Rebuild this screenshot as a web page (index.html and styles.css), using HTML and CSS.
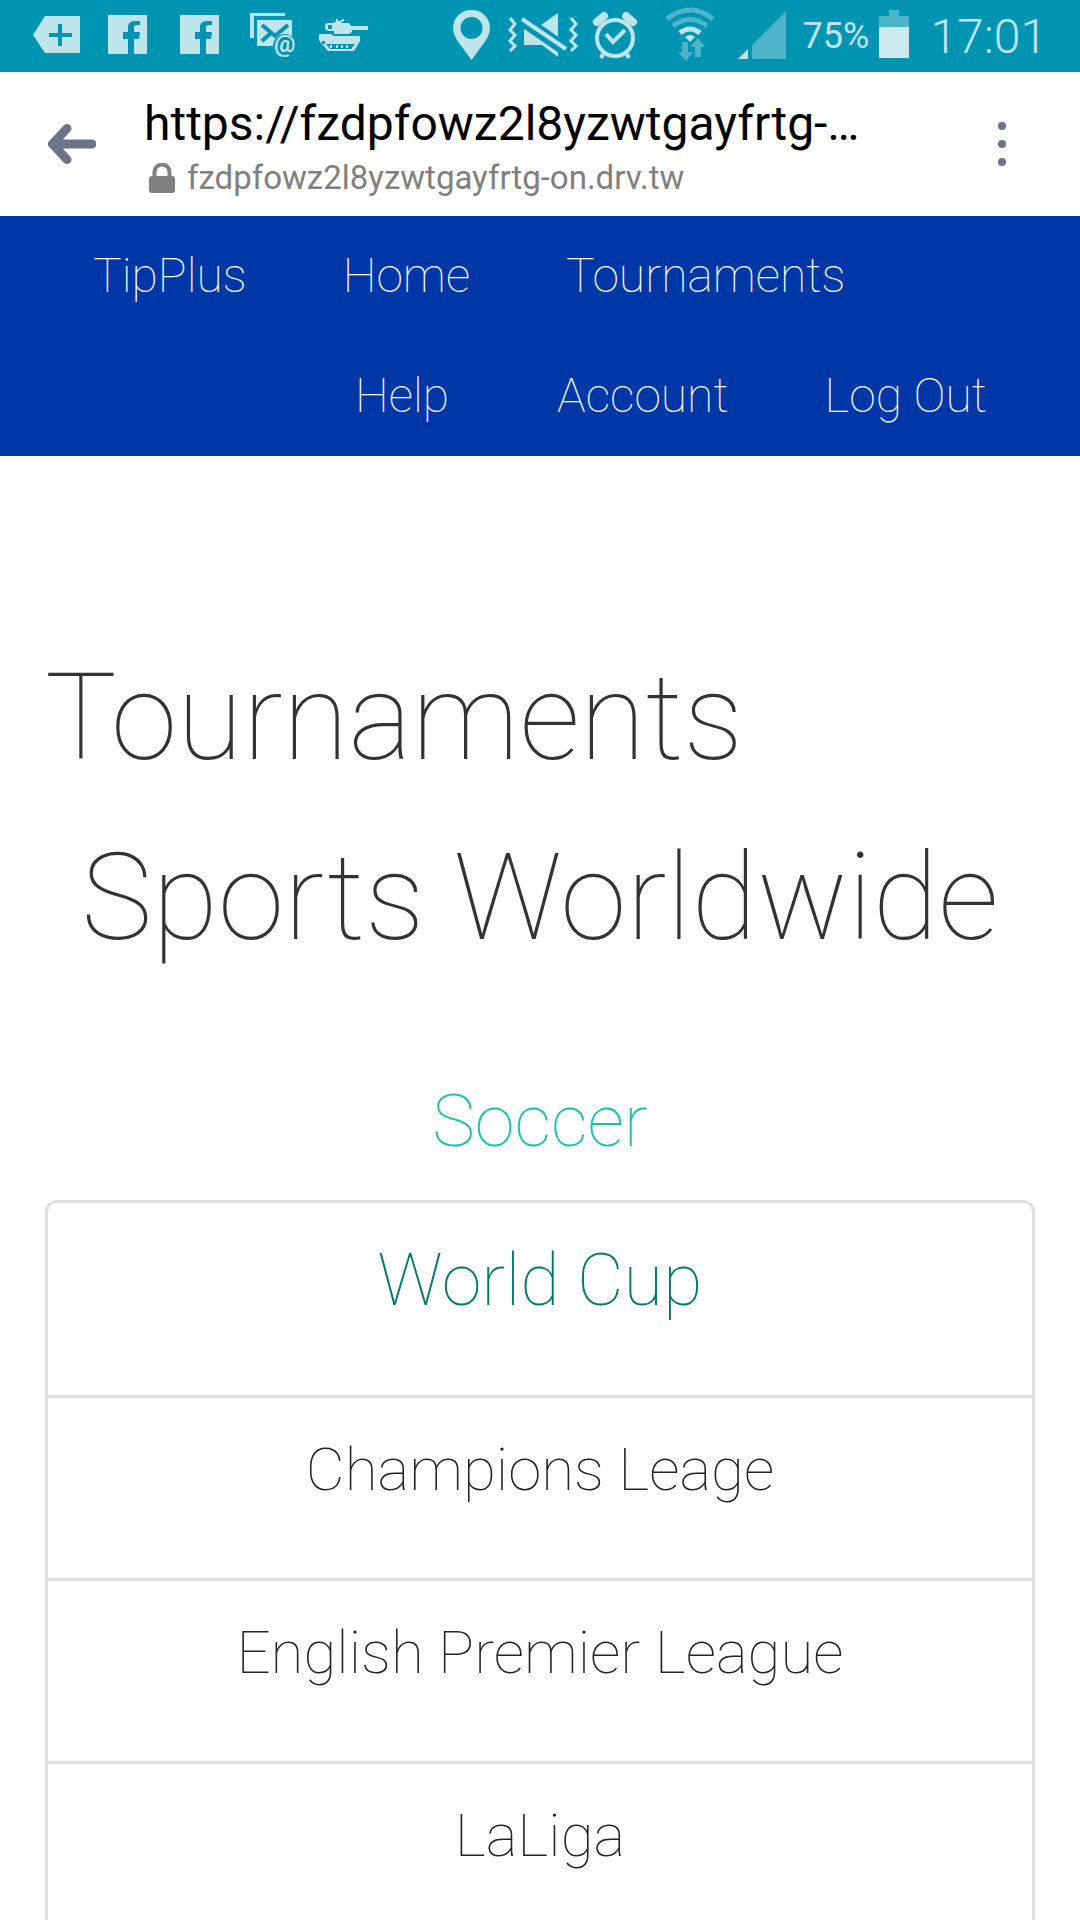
FILE: index.html
```html
<!DOCTYPE html>
<html lang="en">
<head>
<meta charset="utf-8">
<meta name="viewport" content="width=device-width, initial-scale=1">
<title>TipPlus - Tournaments</title>
<link rel="stylesheet" href="styles.css">
</head>
<body>
<div class="status">
  <div class="status-group">
    <svg class="status-icon" viewBox="0 0 72 72" aria-hidden="true"><path d="M25 16h35v37H25L13 35z"/><path class="cut" d="M40 24v22M29 35h23"/></svg>
    <svg class="status-icon" viewBox="0 0 72 72" aria-hidden="true"><path fill-rule="evenodd" d="M16 15h39v39H42V39h5l1-7h-6v-5q0-2 3-2h3v-4h-5q-7 0-7 6v5h-5v7h5v15H16z"/></svg>
    <svg class="status-icon" viewBox="0 0 72 72" aria-hidden="true"><path fill-rule="evenodd" d="M16 15h39v39H42V39h5l1-7h-6v-5q0-2 3-2h3v-4h-5q-7 0-7 6v5h-5v7h5v15H16z"/></svg>
    <svg class="status-icon" viewBox="0 0 72 72" aria-hidden="true"><path d="M14 13h35v3H18v22h-4z"/><path d="M21 20h35v26H21z"/><path class="cut" d="M26 25l13 11 13-11M26 41l9-8"/><circle class="bar-fill" cx="49" cy="46" r="12"/><text x="38" y="52" class="at">@</text></svg>
    <svg class="status-icon" viewBox="0 0 72 72" aria-hidden="true"><path fill-rule="evenodd" d="M19 23h7l2-2v-2h2v2h2l3-2h1v2l-4 2h9l2 3h17v4H44v2l-3 2H26v-3h-6l-3-2v-4zM20 25v4h4v-4z"/><path fill-rule="evenodd" d="M12 34h11l3 2h25l1 1v4l-6 10H20l-7-8-2-3v-5zM18 44l4 5h21l4-5H18zM14 41v3h3v-3z"/><path d="M22 45h2v3h-2zM28 45h2v3h-2zM33 45h2v3h-2zM38 45h2v3h-2z"/></svg>
  </div>
  <div class="status-group">
    <svg class="status-icon" viewBox="0 0 72 72" aria-hidden="true"><path fill-rule="evenodd" d="M36 10a18 18 0 0 1 19 18c0 7-5 14-9 19L36.500 60 27 47c-4-5-9-12-9-19a18 18 0 0 1 18-18zM36.500 17a11 11 0 1 0 0 22 11 11 0 0 0 0-22z"/></svg>
    <svg class="status-icon" viewBox="0 0 72 72" aria-hidden="true"><path d="M51 13v24L34 25zM17 28l34 23v6L35 45H17z"/><path class="gap" d="M14 19l45 31"/><path class="stroke4" d="M15 19l44 30"/><path class="stroke2" d="M3 18l5 6-5 6 5 5-5 6 5 5-5 5M64 18l5 6-5 6 5 5-5 6 5 5-5 5"/></svg>
    <svg class="status-icon" viewBox="0 0 72 72" aria-hidden="true"><circle class="stroke4" cx="36" cy="38" r="18"/><path class="stroke4" d="M27 34l7 8 12-12M24 54l-2 4M48 54l2 4"/><path class="stroke8" d="M18 22l7-6M54 22l-7-6"/></svg>
    <svg class="status-icon" viewBox="0 0 72 72" aria-hidden="true"><path class="arc dim" d="M16 19q23-18 46 0M22 26q17-13 34 0"/><path class="arc" d="M29 33q10-8 20 0"/><path d="M39 42l-5-5q5-4 10 0z"/><path class="dim-fill" d="M31 42h6v10h5l-7 9-8-9h4zM44 57V47h-5l8-9 7 9h-4v10z"/></svg>
    <svg class="status-icon" viewBox="0 0 72 72" aria-hidden="true"><path d="M15 59l10-10v10z"/><path class="dim-fill" d="M29 59V45l34-34v48z"/></svg>
    <span class="percent">75%</span>
    <svg class="battery" viewBox="0 0 30 72" aria-hidden="true"><path class="dim-fill" d="M10 10h10v6h10v11H0V16h10z"/><path class="level" d="M0 27h30v31H0z"/></svg>
    <span class="clock">17:01</span>
  </div>
</div>
<header class="browser">
  <button class="icon-button" type="button" aria-label="Back"><svg class="glyph" viewBox="0 0 48 48"><path class="back" d="M19 8.500L4.500 24 19 39.500M6 24h38"/></svg></button>
  <div class="address">
    <div class="page-title">https://fzdpfowz2l8yzwtgayfrtg-…</div>
    <div class="host"><svg class="lock" viewBox="0 0 26 30" aria-hidden="true"><path class="shackle" d="M5.500 14V9a7.500 7.500 0 0 1 15 0v5"/><rect y="13" width="26" height="17" rx="3"/></svg><span>fzdpfowz2l8yzwtgayfrtg-on.drv.tw</span></div>
  </div>
  <button class="icon-button" type="button" aria-label="Menu"><svg class="glyph" viewBox="0 0 48 48"><circle cx="24" cy="6" r="4"/><circle cx="24" cy="24" r="4"/><circle cx="24" cy="42" r="4"/></svg></button>
</header>
<nav class="menu">
  <div class="menu-row"><a href="#">TipPlus</a><a href="#">Home</a><a href="#">Tournaments</a></div>
  <div class="menu-row menu-right"><a class="help" href="#">Help</a><a href="#">Account</a><a href="#">Log Out</a></div>
</nav>
<main class="content">
  <h1 class="title">Tournaments</h1>
  <h2 class="title subtitle">Sports Worldwide</h2>
  <h3 class="sport">Soccer</h3>
  <ul class="leagues">
    <li class="featured"><a href="#">World Cup</a></li>
    <li><a href="#">Champions Leage</a></li>
    <li><a href="#">English Premier League</a></li>
    <li><a href="#">LaLiga</a></li>
  </ul>
</main>
</body>
</html>
```
FILE: styles.css
```css
* { box-sizing: border-box; }
body {
  margin: 0;
  background: #fefefe;
  font-family: Roboto, sans-serif;
  font-weight: 100;
}
a { color: inherit; text-decoration: none; }

.status {
  display: flex;
  justify-content: space-between;
  height: 72px;
  padding: 0 33px 0 20px;
  background: #0094b3;
  color: #bfe5ec;
  fill: #bfe5ec;
}
.status-group { display: flex; align-items: center; }
.status-icon { width: 72px; height: 72px; }
.status-icon .cut { fill: none; stroke: #0094b3; stroke-width: 4; }
.status-icon .bar-fill { fill: #0094b3; }
.status-icon .gap { stroke: #0094b3; stroke-width: 13; }
.status-icon .stroke4 { fill: none; stroke: #bfe5ec; stroke-width: 4; }
.status-icon .stroke2 { fill: none; stroke: #bfe5ec; stroke-width: 3; }
.status-icon .stroke8 { fill: none; stroke: #bfe5ec; stroke-width: 8; stroke-linecap: round; }
.status-icon .arc { fill: none; stroke: #bfe5ec; stroke-width: 5; }
.status-icon .dim { stroke: #4db4ca; }
.dim-fill { fill: #4db4ca; }
.level { fill: #cceaf0; }
.at { font-size: 24px; font-weight: 700; }
.percent { margin-left: 8px; font-size: 36px; font-weight: 400; }
.battery { width: 30px; height: 72px; margin: 0 21px 0 10px; }
.clock { font-size: 48px; font-weight: 300; }

.browser {
  display: flex;
  align-items: center;
  height: 144px;
  padding: 0 54px 0 48px;
  background: #fff;
}
.icon-button {
  flex: none;
  display: flex;
  padding: 0;
  border: 0;
  background: none;
}
.glyph { width: 48px; height: 48px; fill: #6b7489; }
.back {
  fill: none;
  stroke: #6b7489;
  stroke-width: 9;
  stroke-linecap: round;
  stroke-linejoin: round;
}
.address { flex: 1; min-width: 0; padding: 8px 108px 0 48px; }
.page-title {
  overflow: hidden;
  color: #000;
  font-size: 48px;
  font-weight: 400;
  line-height: 60px;
  white-space: nowrap;
  text-overflow: ellipsis;
}
.host {
  display: flex;
  align-items: center;
  gap: 12px;
  padding-left: 5px;
  color: #808080;
  font-size: 33px;
  font-weight: 400;
  line-height: 48px;
}
.lock { width: 26px; height: 30px; fill: #808080; }
.shackle { fill: none; stroke: #808080; stroke-width: 4; }

.menu {
  padding: 0 45px;
  background: #0037a6;
  color: #fff;
  font-size: 48px;
  line-height: 120px;
}
.menu-row { display: flex; }
.menu-right { justify-content: flex-end; }
.menu-row a { padding: 0 48px; }
.menu-row .help { margin-right: 12px; }

.content { padding: 172px 45px 0; }
.title {
  margin: 0;
  color: #333;
  font-size: 120px;
  font-weight: 100;
  line-height: 180px;
}
.subtitle { text-align: center; }
.sport {
  margin: 80px 0 24px;
  color: #1bbfaf;
  font-size: 72px;
  font-weight: 100;
  line-height: 108px;
  text-align: center;
}
.leagues {
  margin: 0;
  padding: 0;
  border: 3px solid #dfdfdf;
  border-radius: 12px;
  list-style: none;
  color: #212529;
  font-size: 60px;
  line-height: 90px;
  text-align: center;
}
.leagues li { padding: 27px 36px 63px; }
.leagues li + li { border-top: 3px solid #dfdfdf; }
.leagues .featured { color: #00796b; font-size: 72px; line-height: 102px; }
```
